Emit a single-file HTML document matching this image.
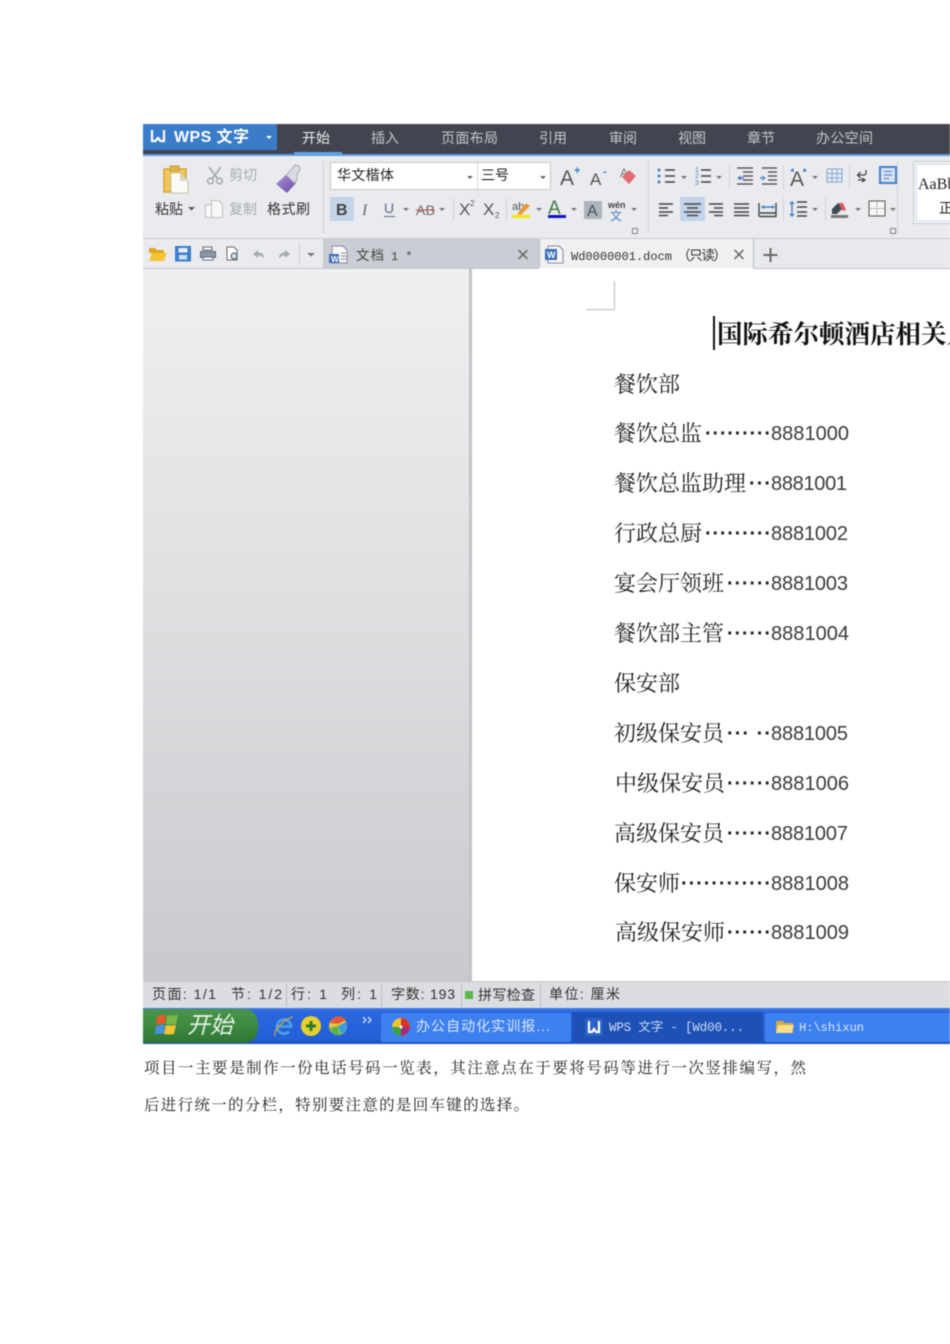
<!DOCTYPE html>
<html lang="zh"><head><meta charset="utf-8"><title>WPS</title>
<style>
html,body{margin:0;padding:0;background:#fff;width:950px;height:1344px;overflow:hidden}
svg{display:block}
text{font-family:"Liberation Sans","Noto Sans CJK SC",sans-serif;white-space:pre}
.m{font-size:14px;fill:#c3c6cc}
.r{font-size:14px;fill:#333}
.g{font-size:14px;fill:#a8abb0}
.s{font-size:14px;fill:#333}
.d{font-family:"Liberation Serif","Noto Serif CJK SC",serif;font-size:22px;fill:#222}
.n{font-family:"Liberation Sans",sans-serif;font-size:20px;fill:#3a3a3a;transform:translateY(-.8px)}
.t{font-family:"Liberation Sans",sans-serif;font-size:20px;font-weight:bold;fill:#222;transform:translateY(-.8px)}
.b{font-family:"Liberation Serif","Noto Serif CJK SC",serif;font-size:15.5px;fill:#222}
.ic{fill:none;stroke:#444;stroke-width:1.4}
.sh{filter:blur(.45px)}
</style></head><body>
<svg width="950" height="1344" viewBox="0 0 950 1344" xmlns="http://www.w3.org/2000/svg">
<defs>
<linearGradient id="lg" x1="0" y1="0" x2="0" y2="1"><stop offset="0" stop-color="#eff0f1"/><stop offset=".45" stop-color="#dfe0e2"/><stop offset="1" stop-color="#c9cacd"/></linearGradient>
<linearGradient id="tb" x1="0" y1="0" x2="0" y2="1"><stop offset="0" stop-color="#3f7ce8"/><stop offset=".12" stop-color="#2a66dc"/><stop offset=".85" stop-color="#2460d8"/><stop offset="1" stop-color="#1d4fc0"/></linearGradient>
<linearGradient id="st" x1="0" y1="0" x2="0" y2="1"><stop offset="0" stop-color="#4a954c"/><stop offset=".5" stop-color="#3d8a40"/><stop offset="1" stop-color="#2e7533"/></linearGradient>
<linearGradient id="br" x1="0" y1="0" x2="1" y2="1"><stop offset="0" stop-color="#a98fd8"/><stop offset="1" stop-color="#6a4ea8"/></linearGradient>
</defs>
<rect width="950" height="1344" fill="#fff"/>
<g class="sh">
<!-- title bar -->
<rect x="143" y="124" width="807" height="30" fill="#42454f"/>
<rect x="143" y="154" width="807" height="2" fill="#5f9ce0"/>
<rect x="143" y="124" width="134" height="26" fill="#3a7cc8"/>
<path d="M152 130v11h3.500l2.500-3 2.500 3h3.500v-11" fill="none" stroke="#fff" stroke-width="2.200"/>
<text x="174" y="142" font-size="16" font-weight="bold" fill="#fff" textLength="75">WPS 文字</text>
<path d="M266 136h6l-3 3z" fill="#fff"/>
<rect x="294" y="152" width="48" height="3" fill="#5fa3e6"/>
<text class="m" x="302" y="143" style="fill:#f0f0f0" textLength="28">开始</text>
<text class="m" x="371" y="143" textLength="28">插入</text>
<text class="m" x="441" y="143" textLength="57">页面布局</text>
<text class="m" x="539" y="143" textLength="28">引用</text>
<text class="m" x="609" y="143" textLength="28">审阅</text>
<text class="m" x="678" y="143" textLength="28">视图</text>
<text class="m" x="747" y="143" textLength="28">章节</text>
<text class="m" x="816" y="143" textLength="57">办公空间</text>

<!-- ribbon -->
<rect x="143" y="156" width="807" height="82" fill="#e9ebee"/>
<rect x="143" y="238" width="807" height="1" fill="#c9cbcf"/>
<path d="M323.500 161v72M648.500 161v72M897.500 161v72" stroke="#cfd1d5"/>

<!-- paste -->
<rect x="164" y="169" width="22" height="23" fill="#f0c65a" stroke="#d6a534" stroke-width="1.500"/>
<rect x="170" y="166" width="9" height="5" fill="#e2b64a" stroke="#c99a2c"/>
<path d="M171 173h9l8 8v12h-17z" fill="#fbfaf6" stroke="#c8c0a8"/>
<path d="M180 173v8h8z" fill="#d8d4c8"/>
<text class="r" x="155" y="214" textLength="28">粘贴</text>
<path d="M188 207h7l-3.500 3.500z" fill="#556"/>
<!-- scissors -->
<path d="M209 167l9 12M221 167l-9 12" stroke="#a2a6ab" stroke-width="1.500" fill="none"/>
<circle cx="210.500" cy="181" r="2.800" fill="none" stroke="#a2a6ab" stroke-width="1.500"/><circle cx="219.500" cy="181" r="2.800" fill="none" stroke="#a2a6ab" stroke-width="1.500"/>
<text class="g" x="229" y="180" textLength="28">剪切</text>
<!-- copy -->
<path d="M205.500 204.500h9v13h-9z" fill="#f7f7f7" stroke="#bcbfc4"/>
<path d="M211.500 200.500h7l4 4v13h-11z" fill="#f7f7f7" stroke="#bcbfc4"/>
<text class="g" x="229" y="214" textLength="28">复制</text>
<!-- brush -->
<path d="M276 184l10-9 10 8-9 10z" fill="url(#br)"/>
<path d="M286 175l6-6 3-4 4 1 1 4-3 4 0 6-3 3z" fill="#d9dbe4" stroke="#9a9aa8" stroke-width=".8"/>
<text class="r" x="267" y="214" textLength="43">格式刷</text>

<!-- font -->
<rect x="330.500" y="162.500" width="220" height="27" fill="#fff" stroke="#c4c6ca"/>
<path d="M477.500 163v26" stroke="#d5d7da"/>
<text x="337" y="180" font-size="14" fill="#222" textLength="57">华文楷体</text>
<path d="M467 176h6l-3 3zM540 176h6l-3 3z" fill="#666"/>
<text x="481" y="180" font-size="14" fill="#222" textLength="28">三号</text>
<text x="560" y="185" font-size="21" fill="#555">A</text><text x="574" y="174" font-size="11" font-weight="bold" fill="#3a78c0">+</text>
<text x="590" y="185" font-size="17" fill="#555">A</text><text x="603" y="175" font-size="11" font-weight="bold" fill="#3a78c0">-</text>
<text x="620" y="177" font-size="12" fill="#777">A</text>
<path d="M622 177l7-7 7 6-7 8z" fill="#e56a72"/>

<!-- row 2 font -->
<rect x="330" y="197" width="24" height="24" fill="#c3d3e8"/>
<text x="336" y="215" font-size="16" font-weight="bold" fill="#444">B</text>
<text x="362" y="215" font-size="16" font-style="italic" fill="#666" style="font-family:'Liberation Serif',serif">I</text>
<text x="384" y="213" font-size="14" fill="#5a6a88">U</text><path d="M384 216.500h11" stroke="#5a6a88"/>
<path d="M403 208h6l-3 3zM439 208h6l-3 3z" fill="#777"/>
<text x="416" y="215" font-size="14" fill="#666" textLength="19">AB</text><path d="M416 210h19" stroke="#c44"/>
<path d="M453.500 198v22M506.500 198v22" stroke="#cfd1d5"/>
<text x="459" y="215" font-size="17" fill="#555">X</text><text x="470" y="206" font-size="8" fill="#555">2</text>
<text x="483" y="215" font-size="17" fill="#555">X</text><text x="495" y="218" font-size="8" fill="#555">2</text>
<text x="512" y="210" font-size="11" fill="#555">ab</text>
<path d="M517 214l9-11 4 3-9 9z" fill="#e89a3c"/><rect x="512" y="215" width="18" height="3" fill="#f5e800"/>
<path d="M536 208h6l-3 3z" fill="#777"/>
<text x="548" y="214" font-size="19" fill="#3f7a3f">A</text><rect x="548" y="215" width="18" height="3" fill="#1010d0"/>
<path d="M571 208h6l-3 3z" fill="#777"/>
<rect x="584" y="201" width="18" height="18" fill="#aeb4bb"/><text x="587" y="216" font-size="16" fill="#4a5058">A</text>
<text x="608" y="208" font-size="9" font-weight="bold" fill="#444">wén</text><text x="610" y="220" font-size="12" fill="#4a7fc4">文</text>
<path d="M631 208h6l-3 3z" fill="#777"/>
<path d="M632.500 228.500h5v5h-5z" fill="none" stroke="#888"/>

<!-- paragraph -->
<rect x="680" y="197" width="25" height="24" fill="#c3d3e8"/>
<g class="ic">
<path d="M665 170h10M665 176h10M665 182h10M701 170h10M701 176h10M701 182h10"/>
<path d="M737 168h16M743 172h10M743 176h10M743 180h10M737 184h16M762 168h15M768 172h9M768 176h9M768 180h9M762 184h15" stroke-width="1.200"/>
<path d="M659 204h14M659 208h9M659 212h14M659 215.500h9M684 204h17M687 208h11M684 212h17M687 215.500h11M709 204h14M714 208h9M709 212h14M714 215.500h9M734 204h15M734 208h15M734 212h15M734 215.500h15"/>
<path d="M759 203v14M776 203v14M760 216.500h16M760 213h16"/>
<path d="M797 202h10M797 207h10M797 212h10M797 216h10"/>
</g>
<g fill="#4a7fc4">
<circle cx="659" cy="170" r="1.500"/><circle cx="659" cy="176" r="1.500"/><circle cx="659" cy="182" r="1.500"/>
<text x="695" y="172" font-size="7">1</text><text x="695" y="178" font-size="7">2</text><text x="695" y="185" font-size="7">3</text>
<path d="M737 178l4-2.500v5zM741 177.300h3v1.400h-3zM766 178l-4-2.500v5zM760 177.300h3v1.400h-3z"/>
<path d="M761 207l3-2v4zM775 207l-3-2v4zM764 206.300h8v1.400h-8z"/>
<path d="M792 201l3 3h-6zM792 217l3-3h-6zM791.300 204h1.400v10h-1.400z"/>
</g>
<path d="M681 176h6l-3 3zM716 176h6l-3 3zM812 176h6l-3 3z" fill="#777"/>
<path d="M812 208h6l-3 3zM855 208h6l-3 3zM890 208h6l-3 3z" fill="#777"/>
<path d="M729.500 165v24M783.500 165v24M783.500 198v22M825.500 198v22M849.500 165v24" stroke="#cfd1d5"/>
<text x="790" y="186" font-size="21" fill="#555">A</text>
<path d="M790 171l3-3 1 4zM807 171l-3-3-1 4z" fill="#3b78c0"/>
<path d="M827 169h15v13h-15zM832 169v13M837 169v13M827 173.500h15M827 178h15" fill="none" stroke="#7fa6d8"/>
<path d="M866 170v3a2 2 0 0 1-2 2h-6M860.500 172l-3 3 3 3M858 180h7M862 178l3 2-3 2" fill="none" stroke="#444" stroke-width="1.300"/>
<rect x="880" y="167" width="16" height="16" fill="#d5e2f2" stroke="#4a7fc4" stroke-width="2"/>
<path d="M884 171.500h8M884 175h8M884 178.500h5" stroke="#4a7fc4"/>
<!-- shading / border -->
<path d="M832 209l6-6 5 5-6 6h-5z" fill="#3f4a56"/><path d="M838 203l5 0 3 7-3 1z" fill="#e05a5a"/>
<rect x="831" y="215" width="17" height="3" fill="#777"/>
<rect x="869" y="201" width="16" height="15" fill="#f7f7f7" stroke="#555"/>
<path d="M877 202v13M870 208.500h14" stroke="#999" stroke-dasharray="2 1"/>
<path d="M890.500 228.500h5v5h-5z" fill="none" stroke="#888"/>

<!-- style box -->
<rect x="913.500" y="161.500" width="40" height="62" fill="#fff" stroke="#c4c6ca"/>
<rect x="916" y="164" width="40" height="57" fill="#fff" stroke="#dce6f5" stroke-width="2"/>
<text x="918" y="189" font-size="16" fill="#222" style="font-family:'Liberation Serif',serif">AaBb</text>
<text x="939" y="213" font-size="14" fill="#222">正文</text>

<!-- tab bar -->
<rect x="143" y="239" width="180" height="29" fill="#e9ebee"/>
<rect x="323" y="239" width="216" height="29" fill="#c9cdd4"/>
<rect x="539" y="239" width="214" height="29" fill="#eff0f2"/>
<rect x="753" y="239" width="197" height="29" fill="#e7e9ec"/>
<path d="M539.500 239v29M753.500 239v29" stroke="#b8bbc0"/>
<rect x="143" y="268" width="396" height="1" fill="#c4c6ca"/><rect x="753" y="268" width="197" height="1" fill="#c4c6ca"/>
<path d="M149 248h6l2 2h7v3h-15z" fill="#e0a81f"/><path d="M149 261l3-8h15l-3 8z" fill="#f5c436"/>
<rect x="175" y="246" width="16" height="15.500" fill="#3f80cc"/><rect x="178.500" y="248" width="9" height="4.500" fill="#e6eef8"/><rect x="179" y="255" width="8" height="4.500" fill="#cfdef2"/>
<rect x="203" y="247" width="9" height="3" fill="#fff" stroke="#667"/><rect x="200.500" y="251.500" width="15" height="6" fill="#8b98a8" stroke="#667"/><rect x="203" y="257" width="10" height="3" fill="#fff" stroke="#667"/>
<path d="M227 247h7l3 3v10h-10z" fill="#fff" stroke="#666"/><circle cx="234" cy="256" r="3" fill="#cfe0f2" stroke="#555"/>
<path d="M253 254l5-4v2.500c4 0 6 2 6 6-1.500-2-3-3-6-3v2.500z" fill="#a6a9ae"/>
<path d="M290 254l-5-4v2.500c-4 0-6 2-6 6 1.500-2 3-3 6-3v2.500z" fill="#a6a9ae"/>
<path d="M299.500 243v21" stroke="#cfd1d5"/>
<path d="M307 253h8l-4 3.500z" fill="#777"/>
<path d="M332 246h11l4 4v13h-15z" fill="#f7f7f7" stroke="#889"/><rect x="329" y="254" width="10" height="9" fill="#3a6db8"/>
<text x="331" y="262" font-size="8" font-weight="bold" fill="#fff">W</text>
<path d="M341 253h5M341 256h5M341 259h5" stroke="#889"/>
<text x="356" y="260" font-size="13.500" fill="#444" textLength="28">文档</text>
<text x="391" y="260" font-size="12" fill="#444" style="font-family:'Liberation Mono',monospace">1 *</text>
<path d="M518.500 250l9 9M527.500 250l-9 9M734.500 250l9 9M743.500 250l-9 9" stroke="#666" stroke-width="1.500"/>
<path d="M548 246h11l4 4v13h-15z" fill="#f7f7f7" stroke="#889"/><rect x="545" y="249" width="12" height="11" fill="#3a6db8"/>
<text x="547" y="258" font-size="9" font-weight="bold" fill="#fff">W</text>
<text x="571" y="260" font-size="12" fill="#333" style="font-family:'Liberation Mono',monospace" textLength="101">Wd0000001.docm</text>
<text x="677" y="260" font-size="13.500" fill="#333" textLength="50">（只读）</text>
<path d="M770.500 248v14M763.500 255h14" stroke="#666" stroke-width="2"/>

<!-- document area -->
<rect x="143" y="269" width="326" height="712" fill="url(#lg)"/>
<rect x="469" y="269" width="3" height="712" fill="#c2c3c6"/>
<rect x="472" y="269" width="478" height="712" fill="#fff"/>
<path d="M586 309.500h28.500V281" fill="none" stroke="#b9b9b9"/>
<rect x="713" y="316" width="2" height="34" fill="#111"/>
<text x="717" y="343" font-size="25.500" font-weight="bold" fill="#111" style="font-family:'Liberation Serif','Noto Serif CJK SC',serif" textLength="255">国际希尔顿酒店相关人</text>

<text class="d" x="614" y="392">餐饮部</text>
<text class="d" x="614" y="441">餐饮总监</text><text class="t" x="705" y="441" textLength="66">·········</text><text class="n" x="771" y="441" textLength="78">8881000</text>
<text class="d" x="614" y="491">餐饮总监助理</text><text class="t" x="749" y="491" textLength="22">···</text><text class="n" x="771" y="491" textLength="76">8881001</text>
<text class="d" x="614" y="541">行政总厨</text><text class="t" x="705" y="541" textLength="66">·········</text><text class="n" x="771" y="541" textLength="77">8881002</text>
<text class="d" x="614" y="591">宴会厅领班</text><text class="t" x="727" y="591" textLength="44">······</text><text class="n" x="771" y="591" textLength="77">8881003</text>
<text class="d" x="614" y="641">餐饮部主管</text><text class="t" x="727" y="641" textLength="44">······</text><text class="n" x="771" y="641" textLength="78">8881004</text>
<text class="d" x="614" y="691">保安部</text>
<text class="d" x="614" y="741">初级保安员</text><text class="t" x="727" y="741" textLength="44">··· ··</text><text class="n" x="771" y="741" textLength="77">8881005</text>
<text class="d" x="615" y="791">中级保安员</text><text class="t" x="727" y="791" textLength="44">······</text><text class="n" x="771" y="791" textLength="78">8881006</text>
<text class="d" x="614" y="841">高级保安员</text><text class="t" x="727" y="841" textLength="44">······</text><text class="n" x="771" y="841" textLength="77">8881007</text>
<text class="d" x="614" y="891">保安师</text><text class="t" x="681" y="891" textLength="90">············</text><text class="n" x="771" y="891" textLength="78">8881008</text>
<text class="d" x="615" y="940">高级保安师</text><text class="t" x="727" y="940" textLength="44">······</text><text class="n" x="771" y="940" textLength="78">8881009</text>

<!-- status -->
<rect x="143" y="981" width="807" height="27" fill="#dcdde0"/>
<rect x="143" y="981" width="807" height="1" fill="#c4c5c8"/>
<path d="M286.500 983v24M381.500 983v24M461.500 983v24M540.500 983v24" stroke="#bcbdc1"/>
<text class="s" x="152" y="999" textLength="64">页面: 1/1</text>
<text class="s" x="231" y="999" textLength="51">节: 1/2</text>
<text class="s" x="291" y="999" textLength="36">行: 1</text>
<text class="s" x="341" y="999" textLength="36">列: 1</text>
<text class="s" x="391" y="999" textLength="64">字数: 193</text>
<rect x="465" y="991" width="8" height="8" fill="#58b84a"/>
<text x="478" y="1000" font-size="14" fill="#333" textLength="57">拼写检查</text>
<text class="s" x="549" y="999" textLength="71">单位: 厘米</text>

<!-- taskbar -->
<rect x="143" y="1008" width="807" height="36" fill="url(#tb)"/>
<path d="M143 1009h100q15 0 15 17t-15 17h-100z" fill="url(#st)"/>
<path d="M157 1017q4-3 9-2l-1 9q-5-1-9 1z" fill="#e2592a"/><path d="M167 1015q5 1 11 0l-2 9q-5 1-10 0z" fill="#7ab648"/><path d="M156 1026q4-2 9-1l-1 9q-5-1-9 1z" fill="#4a8fe0"/><path d="M166 1025q5 1 10 0l-2 9q-5 1-10 0z" fill="#f1c232"/>
<text x="187" y="1033" font-size="23" font-style="italic" fill="#e8f2e6">开始</text>
<path d="M277.500 1026.500h13.500a7 7 0 1 0-2 5" fill="none" stroke="#4aa0e6" stroke-width="2.800"/>
<path d="M275 1036c-2-5 8-16 18-19" fill="none" stroke="#c9a14a" stroke-width="1.300"/>
<circle cx="311" cy="1026" r="10" fill="#e8cf2c"/><path d="M306 1026h10M311 1021v10" stroke="#2f7a32" stroke-width="3"/>
<circle cx="338" cy="1026" r="9" fill="#e9c93a"/><path d="M330 1023a9 9 0 0 1 16-3l-8 4z" fill="#e25a3a"/><path d="M338 1026l8-4a9 9 0 0 1-5 12z" fill="#3a9ae0"/><path d="M330 1028a9 9 0 0 0 10 7l-2-9z" fill="#59b44c"/>
<path d="M363 1017l3 3-3 3M368 1017l3 3-3 3" fill="none" stroke="#cfe0fa" stroke-width="1.300"/>
<rect x="381" y="1013" width="190" height="29" rx="2" fill="#3d80f0"/>
<circle cx="401" cy="1027" r="9" fill="#f2c230"/><path d="M401 1027l0-9a9 9 0 0 1 9 9z" fill="#d8352a"/><path d="M401 1027l9 0a9 9 0 0 1-9 9z" fill="#a12e7c"/><path d="M401 1027l0 9a9 9 0 0 1-9-9z" fill="#3e9e4a"/><circle cx="401" cy="1027" r="1.500" fill="#fff"/>
<text x="416" y="1031" font-size="14" fill="#dbe8fb" textLength="134">办公自动化实训报...</text>
<rect x="572" y="1012" width="191" height="30" rx="2" fill="#1e51b6"/>
<rect x="585" y="1018" width="18" height="18" fill="#2a62c8"/><path d="M589 1021v11h3l2-3 2 3h3v-11" fill="none" stroke="#fff" stroke-width="2.200"/>
<text x="609" y="1031" font-size="12.500" fill="#cfdcf5" style="font-family:'Liberation Mono','Noto Sans CJK SC',monospace" textLength="135">WPS 文字 - [Wd00...</text>
<rect x="765" y="1013" width="185" height="29" rx="2" fill="#3d80f0"/>
<path d="M776 1021h7l2 2h8v10h-17z" fill="#d8a93a"/><path d="M776 1033l2-8h16l-2 8z" fill="#f7dc8a"/>
<text x="799" y="1031" font-size="12" fill="#dbe8fb" style="font-family:'Liberation Mono',monospace" textLength="65">H:\shixun</text>
</g>

<!-- body -->
<g class="sh">
<text class="b" x="144" y="1073" textLength="662">项目一主要是制作一份电话号码一览表，其注意点在于要将号码等进行一次竖排编写，然</text>
<text class="b" x="144" y="1110" textLength="385">后进行统一的分栏，特别要注意的是回车键的选择。</text>
</g>
</svg>
</body></html>
